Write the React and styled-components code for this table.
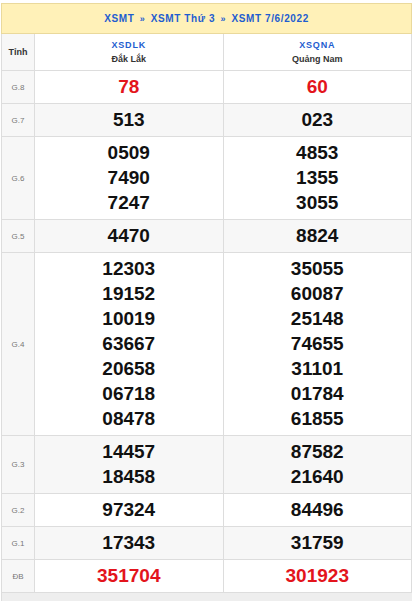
import React from "react";
import styled, { createGlobalStyle } from "styled-components";

const GlobalStyle = createGlobalStyle`
  body {
    margin: 0;
    background: #fff;
    font-family: "Liberation Sans", Arial, sans-serif;
  }
`;

const rows = [
  { label: "G.8", a: ["78"], b: ["60"], red: true },
  { label: "G.7", a: ["513"], b: ["023"] },
  { label: "G.6", a: ["0509", "7490", "7247"], b: ["4853", "1355", "3055"] },
  { label: "G.5", a: ["4470"], b: ["8824"] },
  {
    label: "G.4",
    a: ["12303", "19152", "10019", "63667", "20658", "06718", "08478"],
    b: ["35055", "60087", "25148", "74655", "31101", "01784", "61855"],
  },
  { label: "G.3", a: ["14457", "18458"], b: ["87582", "21640"] },
  { label: "G.2", a: ["97324"], b: ["84496"] },
  { label: "G.1", a: ["17343"], b: ["31759"] },
  { label: "ĐB", a: ["351704"], b: ["301923"], red: true },
];

export default function App() {
  return (
    <Wrap>
      <GlobalStyle />
      <Table>
        <colgroup>
          <col style={{ width: 33 }} />
          <col />
          <col />
        </colgroup>
        <thead>
          <tr>
            <Title colSpan={3}>
              <a>XSMT</a> <Sep>»</Sep> <a>XSMT Thứ 3</a> <Sep>»</Sep> <a>XSMT 7/6/2022</a>
            </Title>
          </tr>
          <tr>
            <HeadLabel>Tỉnh</HeadLabel>
            <Province>
              <Code>XSDLK</Code>
              <Name>Đắk Lắk</Name>
            </Province>
            <Province>
              <Code>XSQNA</Code>
              <Name>Quảng Nam</Name>
            </Province>
          </tr>
        </thead>
        <tbody>
          {rows.map((r, i) => (
            <Row key={r.label} $alt={i % 2 === 1}>
              <Label>{r.label}</Label>
              <Numbers $red={r.red}>
                {r.a.map((n) => (
                  <div key={n}>{n}</div>
                ))}
              </Numbers>
              <Numbers $red={r.red}>
                {r.b.map((n) => (
                  <div key={n}>{n}</div>
                ))}
              </Numbers>
            </Row>
          ))}
        </tbody>
      </Table>
      <Footer />
    </Wrap>
  );
}

const Wrap = styled.div`
  padding: 3px 6px 0 1px;
`;

const Table = styled.table`
  width: 411px;
  border-collapse: collapse;
  table-layout: fixed;

  td, th {
    border: 1px solid #dddddd;
    text-align: center;
    vertical-align: middle;
  }
`;

const Title = styled.th`
  background: #fff1b8;
  border: 1px solid #ead99c !important;
  height: 29px;
  padding: 0;
  font-size: 10px;
  font-weight: bold;
  color: #1e5dd0;
  letter-spacing: 0.6px;

  a { color: #1e5dd0; }
`;

const Sep = styled.span`
  color: #1e5dd0;
  font-size: 9px;
  margin: 0 2px;
`;

const HeadLabel = styled.th`
  background: #f7f7f7;
  font-size: 9px;
  font-weight: bold;
  color: #333;
  height: 36px;
  padding: 0;
`;

const Province = styled.th`
  background: #fff;
  padding: 4px 0;
  font-size: 9px;
  font-weight: bold;
`;

const Code = styled.div`
  color: #1e5dd0;
  letter-spacing: 0.8px;
  line-height: 14px;
`;

const Name = styled.div`
  color: #333;
  line-height: 14px;
`;

const Row = styled.tr`
  background: ${(p) => (p.$alt ? "#f7f7f7" : "#fff")};
`;

const Label = styled.td`
  background: #f7f7f7;
  font-size: 8px;
  color: #777;
  padding: 0;
`;

const Numbers = styled.td`
  padding: 3px 0 4px;
  font-size: 19px;
  font-weight: bold;
  line-height: 25px;
  color: ${(p) => (p.$red ? "#e3141c" : "#111")};
`;

const Footer = styled.div`
  width: 411px;
  height: 10px;
  background: #eeeeee;
  border-left: 1px solid #dddddd;
  box-sizing: border-box;
`;
